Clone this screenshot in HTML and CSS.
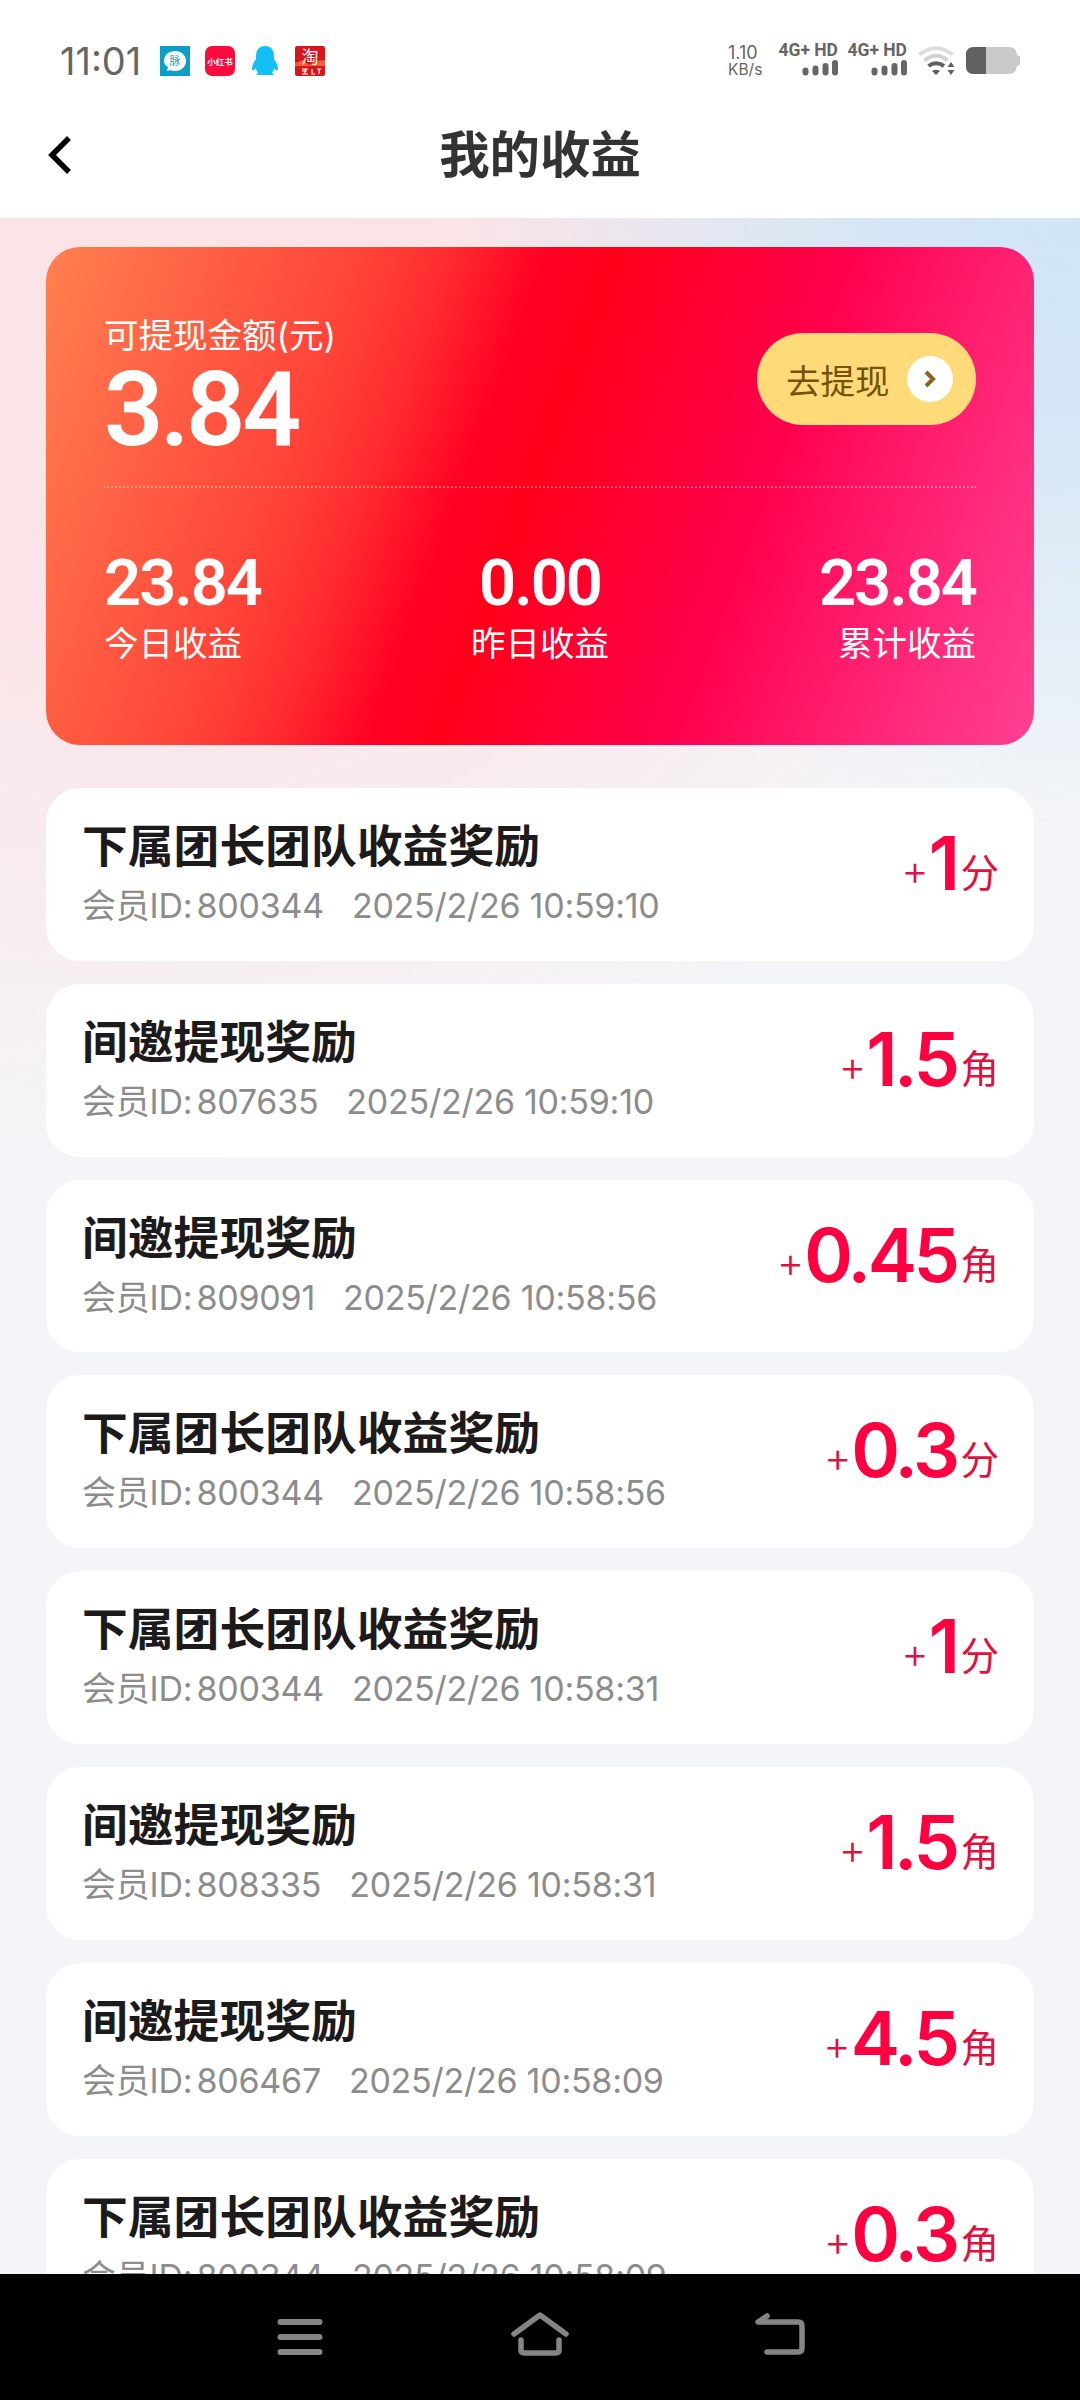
FILE: index.html
```html
<!DOCTYPE html>
<html lang="zh-CN">
<head>
    <meta charset="UTF-8">
    <meta name="viewport" content="width=device-width, initial-scale=1.0">
    <title>我的收益</title>
    <link rel="stylesheet" href="styles.css">
</head>
<body>
    <div class="screen">
        <div class="status-bar">
            <span class="clock">11:01</span>
            <div class="notices">
                <svg class="notice" viewBox="0 0 30 30">
                    <rect width="30" height="30" fill="#0b9fc6"/>
                    <path d="M15 5c6 0 11 4 11 10s-5 10-11 10c-2 0-3 0-4-1l-4 1 1-4c-2-1-4-3-4-6C4 9 9 5 15 5z" fill="#fff"/>
                    <text x="15" y="19" font-size="11" text-anchor="middle" fill="#0b9fc6">脉</text>
                </svg>
                <svg class="notice" viewBox="0 0 30 30">
                    <rect width="30" height="30" rx="7" fill="#ff0a3c"/>
                    <text x="15" y="18.500" font-size="8.500" font-weight="bold" text-anchor="middle" fill="#fff">小红书</text>
                </svg>
                <svg class="notice" viewBox="0 0 30 30">
                    <path d="M15 0c6 0 9 4 9 10v3c2 3 4 6 4 10 0 2-2 2-4-1 0 2-1 4-2 5 2 1 2 2 1 2H7c-1 0-1-1 1-2-1-1-2-3-2-5-2 3-4 3-4 1 0-4 2-7 4-10v-3C6 4 9 0 15 0z" fill="#12c0f5"/>
                </svg>
                <svg class="notice" viewBox="0 0 30 30">
                    <rect width="30" height="30" rx="2" fill="#d9151b"/>
                    <path d="M0 17l8-3 6 5 8-4 8-1v6H0z" fill="#f0603c"/>
                    <text x="15" y="17" font-size="17" text-anchor="middle" fill="#fff">淘</text>
                    <path d="M7 23h6M10 23v5M7 28h6M7 25h5M17 23v5h3M22 23h4M24 23v5" fill="none" stroke="#fff" stroke-width="1.200"/>
                </svg>
            </div>
            <div class="net-speed"><span>1.10</span><span>KB/s</span></div>
            <div class="signal">
                <span>4G+ HD</span>
                <svg class="bars" viewBox="0 0 36 16"><path d="M3.500 10.500v2M13.500 8.500v4M23.500 6v6.500M33 3v9.500" stroke="#666" stroke-width="6" stroke-linecap="round"/></svg>
            </div>
            <div class="signal">
                <span>4G+ HD</span>
                <svg class="bars" viewBox="0 0 36 16"><path d="M3.500 10.500v2M13.500 8.500v4M23.500 6v6.500M33 3v9.500" stroke="#666" stroke-width="6" stroke-linecap="round"/></svg>
            </div>
            <svg class="wifi" viewBox="0 0 38 30">
                <path d="M1.500 8.500Q18 -4 34.500 8.500" fill="none" stroke="#dcdcdc" stroke-width="4"/>
                <path d="M6.500 14.500Q18 5 29.500 14.500" fill="none" stroke="#d2d2d2" stroke-width="4"/>
                <path d="M10.500 20Q18 14.500 26 20" fill="none" stroke="#606060" stroke-width="4"/>
                <path d="M14 25q4-2.500 8 0l-4 4z" fill="#606060"/>
                <path d="M33 16l3.500 5h-7zM33 29l3.500-5h-7z" fill="#606060"/>
            </svg>
            <svg class="battery" viewBox="0 0 54 28">
                <path d="M8 0h35q7 0 8 8 3 0 3 3v5q0 3-3 3-1 8-8 8H8q-8 0-8-8V8q0-8 8-8z" fill="#cacaca"/>
                <path d="M20 0H8Q0 0 0 8v11q0 8 8 8h12z" fill="#606060"/>
            </svg>
        </div>

        <div class="nav-bar">
            <svg class="back" viewBox="0 0 24 38"><path d="M21 2L4 19l17 17" fill="none" stroke="#000" stroke-width="5.500"/></svg>
            <h1>我的收益</h1>
        </div>

        <div class="page">
            <div class="card">
                <div class="card-top">
                    <div class="balance">
                        <div class="label">可提现金额(元)</div>
                        <div class="total">3.84</div>
                    </div>
                    <div class="withdraw">
                        <span>去提现</span>
                        <svg class="go" viewBox="0 0 46 46">
                            <circle cx="23" cy="23" r="23" fill="#fff"/>
                            <path d="M19 16l7 7-7 7" fill="none" stroke="#8a6420" stroke-width="4"/>
                        </svg>
                    </div>
                </div>
                <div class="stats">
                    <div class="stat">
                        <div class="stat-num">23.84</div>
                        <div class="label">今日收益</div>
                    </div>
                    <div class="stat">
                        <div class="stat-num">0.00</div>
                        <div class="label">昨日收益</div>
                    </div>
                    <div class="stat">
                        <div class="stat-num">23.84</div>
                        <div class="label">累计收益</div>
                    </div>
                </div>
            </div>

            <div class="list">
                <div class="item">
                    <div class="info">
                        <div class="title">下属团长团队收益奖励</div>
                        <div class="meta"><span class="member">会员ID: 800344</span><span>2025/2/26 10:59:10</span></div>
                    </div>
                    <div class="amount"><i>+</i><b>1</b>分</div>
                </div>
                <div class="item">
                    <div class="info">
                        <div class="title">间邀提现奖励</div>
                        <div class="meta"><span class="member">会员ID: 807635</span><span>2025/2/26 10:59:10</span></div>
                    </div>
                    <div class="amount"><i>+</i><b>1.5</b>角</div>
                </div>
                <div class="item">
                    <div class="info">
                        <div class="title">间邀提现奖励</div>
                        <div class="meta"><span class="member">会员ID: 809091</span><span>2025/2/26 10:58:56</span></div>
                    </div>
                    <div class="amount"><i>+</i><b>0.45</b>角</div>
                </div>
                <div class="item">
                    <div class="info">
                        <div class="title">下属团长团队收益奖励</div>
                        <div class="meta"><span class="member">会员ID: 800344</span><span>2025/2/26 10:58:56</span></div>
                    </div>
                    <div class="amount"><i>+</i><b>0.3</b>分</div>
                </div>
                <div class="item">
                    <div class="info">
                        <div class="title">下属团长团队收益奖励</div>
                        <div class="meta"><span class="member">会员ID: 800344</span><span>2025/2/26 10:58:31</span></div>
                    </div>
                    <div class="amount"><i>+</i><b>1</b>分</div>
                </div>
                <div class="item">
                    <div class="info">
                        <div class="title">间邀提现奖励</div>
                        <div class="meta"><span class="member">会员ID: 808335</span><span>2025/2/26 10:58:31</span></div>
                    </div>
                    <div class="amount"><i>+</i><b>1.5</b>角</div>
                </div>
                <div class="item">
                    <div class="info">
                        <div class="title">间邀提现奖励</div>
                        <div class="meta"><span class="member">会员ID: 806467</span><span>2025/2/26 10:58:09</span></div>
                    </div>
                    <div class="amount"><i>+</i><b>4.5</b>角</div>
                </div>
                <div class="item">
                    <div class="info">
                        <div class="title">下属团长团队收益奖励</div>
                        <div class="meta"><span class="member">会员ID: 800344</span><span>2025/2/26 10:58:09</span></div>
                    </div>
                    <div class="amount"><i>+</i><b>0.3</b>角</div>
                </div>
            </div>
        </div>

        <div class="system-nav">
            <svg viewBox="0 0 60 46"><path d="M10.500 11h39M10.500 26h39M10.500 41h39" stroke="#858585" stroke-width="6" stroke-linecap="round"/></svg>
            <svg viewBox="0 0 60 46"><path d="M4 23L30 4l26 19M11 29v10q0 3 4 3h30q4 0 4-3V29" fill="none" stroke="#858585" stroke-width="5.500" stroke-linecap="round" stroke-linejoin="round"/></svg>
            <svg viewBox="0 0 60 46"><path d="M17 5L8 11h40q4 0 4 4v22q0 4-4 4H17" fill="none" stroke="#858585" stroke-width="5.500" stroke-linecap="round" stroke-linejoin="round"/></svg>
        </div>
    </div>
</body>
</html>
```

FILE: styles.css
```css
* {
    box-sizing: border-box;
}
body {
    margin: 0;
    font-family: Inter, "Noto Sans CJK SC", sans-serif;
    background: #fff;
}
.screen {
    display: flex;
    flex-direction: column;
    width: 1080px;
    height: 2400px;
    overflow: hidden;
}

/* Status bar */
.status-bar {
    display: flex;
    align-items: center;
    height: 121px;
    padding: 0 60px;
    flex-shrink: 0;
    color: #666;
}
.clock {
    font-size: 38px;
    width: 100px;
}
.notices {
    display: flex;
    gap: 15px;
    flex: 1;
}
.notice {
    width: 30px;
    height: 30px;
}
.net-speed {
    display: flex;
    flex-direction: column;
    width: 52px;
    font-size: 18px;
    line-height: 17px;
}
.net-speed span:last-child {
    font-size: 15.5px;
}
.signal {
    display: flex;
    flex-direction: column;
    align-items: flex-end;
    gap: 1px;
    width: 58px;
    margin: -3px 11px 0 0;
    font: bold 17.5px/17px Roboto, sans-serif;
    white-space: nowrap;
}
.bars {
    width: 36px;
    height: 16px;
}
.wifi {
    width: 38px;
    height: 30px;
}
.battery {
    width: 54px;
    height: 28px;
    margin-left: 10px;
}

/* Page header */
.nav-bar {
    display: grid;
    grid-template-columns: 24px 1fr 24px;
    align-items: center;
    height: 97px;
    padding: 0 48px 30px;
    flex-shrink: 0;
}
.back {
    width: 24px;
    height: 38px;
}
h1 {
    margin: 0;
    font-size: 50.4px;
    line-height: 66px;
    font-weight: bold;
    color: #333;
    text-align: center;
}

.page {
    flex: 1;
    min-height: 0;
    overflow: hidden;
    padding: 29px 46px 0;
    background:
        radial-gradient(ellipse 620px 620px at 100% 0, #d1e5f6 0, rgba(209, 229, 246, 0.9) 30%, rgba(209, 229, 246, 0) 100%),
        radial-gradient(ellipse 1000px 950px at 12% 0, #fbe3e6 0, rgba(251, 227, 230, 0.9) 45%, rgba(251, 227, 230, 0) 100%),
        #f4f5f8;
}

/* Balance card */
.card {
    height: 498px;
    padding: 64px 58px 0;
    border-radius: 34px;
    color: #fff;
    background: linear-gradient(110deg, #ff8050 0%, #ff4238 28%, #ff2a2e 35%, #ff0024 43%, #ff001a 49%, #ff004e 69%, #ff2070 83%, #ff4094 100%);
}
.card-top {
    display: flex;
    justify-content: space-between;
    height: 177px;
    border-bottom: 2px dotted rgba(255, 255, 255, 0.35);
}
.label {
    font-size: 34.5px;
    line-height: 50px;
}
.total {
    padding-top: 3px;
    font-family: Roboto, sans-serif;
    font-size: 104px;
    font-weight: 600;
    line-height: 92px;
    letter-spacing: -3.5px;
}
.withdraw {
    display: flex;
    align-items: center;
    justify-content: space-between;
    width: 219px;
    height: 92px;
    margin-top: 22px;
    padding: 0 23px 0 29px;
    border-radius: 46px;
    background: #fedb78;
    color: #755309;
    font-size: 34.5px;
}
.go {
    width: 46px;
    height: 46px;
}
.stats {
    display: grid;
    grid-template-columns: repeat(3, 1fr);
    padding-top: 59px;
    text-align: center;
}
.stat:first-child {
    text-align: left;
}
.stat:last-child {
    text-align: right;
}
.stat-num {
    font-family: Roboto, sans-serif;
    font-size: 65px;
    line-height: 72px;
    font-weight: 600;
    letter-spacing: -2px;
}

/* Income records */
.list {
    display: flex;
    flex-direction: column;
    gap: 23.04px;
    padding-top: 43px;
}
.item {
    display: flex;
    justify-content: space-between;
    height: 172.8px;
    flex-shrink: 0;
    padding: 26px 35px 0 36px;
    border-radius: 34px;
    background: #fff;
}
.title {
    font-size: 45.8px;
    line-height: 66px;
    font-weight: bold;
    color: #1c1a1b;
}
.meta {
    display: flex;
    gap: 28px;
    font-size: 34px;
    line-height: 52px;
    letter-spacing: -0.25px;
    color: #8c8c8c;
}
.member {
    word-spacing: -5px;
}
.amount {
    display: flex;
    align-items: baseline;
    margin-top: -4px;
    font-size: 38.5px;
    line-height: 100px;
    color: #e0113f;
}
.amount i {
    position: relative;
    top: -2px;
    font-size: 42px;
    font-style: normal;
    font-weight: 300;
}
.amount b {
    position: relative;
    top: 3px;
    margin-right: 4px;
    font-size: 74px;
    font-weight: 600;
    letter-spacing: -3.5px;
    color: #ff0040;
}

/* Android buttons */
.system-nav {
    display: flex;
    justify-content: center;
    gap: 180px;
    height: 126px;
    padding-top: 37px;
    flex-shrink: 0;
    background: #000;
}
.system-nav svg {
    width: 60px;
    height: 46px;
}
```
